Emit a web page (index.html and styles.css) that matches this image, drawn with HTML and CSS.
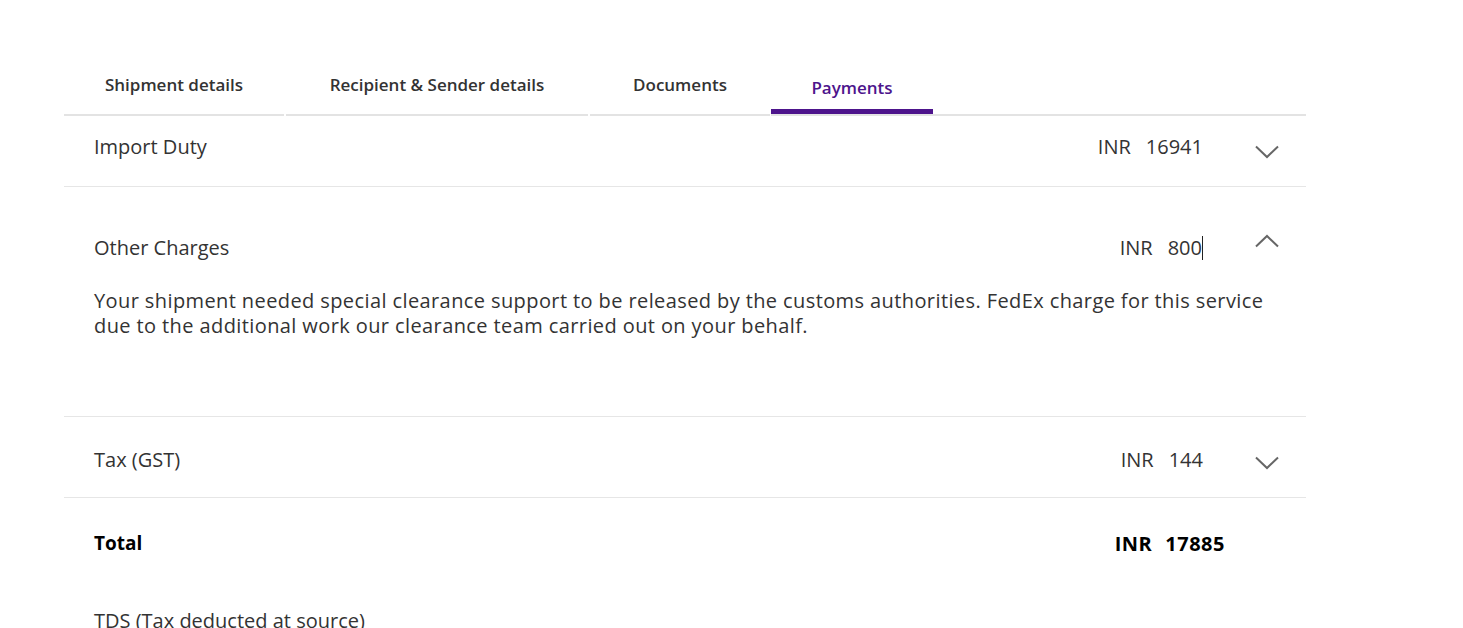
FILE: index.html
```html
<!DOCTYPE html>
<html lang="en">
<head>
    <meta charset="UTF-8">
    <meta name="viewport" content="width=device-width, initial-scale=1.0">
    <title>Payments - Shipment</title>
    <link rel="stylesheet" href="styles.css">
</head>
<body>
    <div class="page">
        <div class="tabs">
            <div class="tab tab-shipment">Shipment details</div>
            <div class="tab tab-recipient">Recipient &amp; Sender details</div>
            <div class="tab tab-documents">Documents</div>
            <div class="tab tab-payments active">Payments</div>
            <div class="tab-rest"></div>
        </div>

        <div class="charge import">
            <div class="charge-head">
                <span class="charge-name">Import Duty</span>
                <span class="amount"><span class="cur">INR</span><span class="num">16941</span></span>
                <span class="chevron down">
                    <svg width="24" height="14" viewBox="0 0 24 14"><path d="M1 1.5 L12 12 L23 1.5" fill="none" stroke="#666" stroke-width="2"/></svg>
                </span>
            </div>
        </div>

        <div class="charge open">
            <div class="charge-head">
                <span class="charge-name">Other Charges</span>
                <span class="amount"><span class="cur">INR</span><span class="num">800<span class="caret"></span></span></span>
                <span class="chevron up">
                    <svg width="24" height="14" viewBox="0 0 24 14"><path d="M1 12.5 L12 2 L23 12.5" fill="none" stroke="#666" stroke-width="2"/></svg>
                </span>
            </div>
            <p class="charge-desc">Your shipment needed special clearance support to be released by the customs authorities. FedEx charge for this service due to the additional work our clearance team carried out on your behalf.</p>
        </div>

        <div class="charge tax">
            <div class="charge-head">
                <span class="charge-name">Tax (GST)</span>
                <span class="amount"><span class="cur">INR</span><span class="num">144</span></span>
                <span class="chevron down">
                    <svg width="24" height="14" viewBox="0 0 24 14"><path d="M1 1.5 L12 12 L23 1.5" fill="none" stroke="#666" stroke-width="2"/></svg>
                </span>
            </div>
        </div>

        <div class="total">
            <span class="charge-name">Total</span>
            <span class="amount"><span class="cur">INR</span><span class="num">17885</span></span>
        </div>

        <div class="tds">TDS (Tax deducted at source)</div>
    </div>
</body>
</html>
```

FILE: styles.css
```css
body {
    font-family: "Open Sans", Arial, sans-serif;
    margin: 0;
    padding: 0;
    background-color: white;
    color: #333;
}
.page {
    width: 1242px;
    margin-left: 64px;
    padding-top: 60px;
}
.tabs {
    display: flex;
    height: 56px;
}
.tab {
    display: flex;
    align-items: center;
    justify-content: center;
    box-sizing: border-box;
    border-bottom: 2px solid #e3e3e3;
    margin-right: 2px;
    font-size: 17px;
    font-weight: 600;
    color: #333;
    padding-bottom: 6px;
}
.tab-shipment { width: 220px; }
.tab-recipient { width: 302px; }
.tab-documents { width: 180px; margin-right: 1px; }
.tab-payments { width: 162px; margin-right: 0; }
.tab.active {
    color: #4d148c;
    padding-bottom: 0;
    box-shadow: inset 0 -5px 0 #4d148c;
}
.tab-rest {
    flex: 1;
    border-bottom: 2px solid #e3e3e3;
}
.charge {
    border-bottom: 1px solid #e6e6e6;
    padding: 0 27px 0 30px;
}
.charge-head {
    display: flex;
    align-items: center;
    height: 70px;
}
.charge-name {
    flex: 1;
    font-size: 20px;
}
.amount {
    display: flex;
    font-size: 20px;
}
.cur {
    margin-right: 15px;
}
.caret {
    display: inline-block;
    width: 1px;
    height: 24px;
    background: #222;
    vertical-align: -5px;
}
.chevron {
    display: flex;
    margin-left: 52px;
    padding-top: 8px;
}
.import .charge-name,
.import .amount {
    margin-bottom: 10px;
}
.import .chevron {
    padding-top: 2px;
}
.chevron.up {
    padding-top: 0;
    padding-bottom: 14px;
}
.open .charge-head {
    height: 79px;
    padding-top: 21px;
}
.charge-desc {
    margin: 1px 0 0;
    height: 128px;
    font-size: 20px;
    letter-spacing: 0.4px;
    line-height: 25px;
    color: #333;
}
.tax .charge-head {
    height: 80px;
}
.tax .charge-name,
.tax .amount {
    margin-top: 4px;
}
.tax .chevron {
    padding-top: 12px;
}
.total {
    display: flex;
    align-items: center;
    height: 90px;
    padding: 0 81px 0 30px;
    color: #000;
    font-weight: 700;
}
.total .charge-name {
    font-size: 19px;
}
.total .amount {
    font-size: 20px;
    letter-spacing: 0.5px;
}
.total .cur {
    margin-right: 13px;
}
.tds {
    padding: 19px 30px 0;
    font-size: 20px;
}
```
